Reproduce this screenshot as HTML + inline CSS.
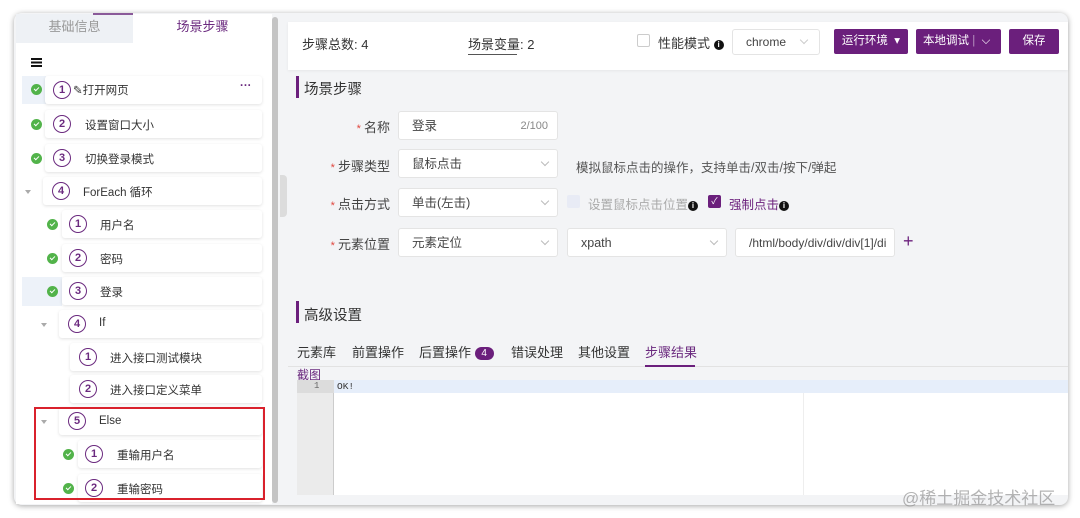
<!DOCTYPE html>
<html><head><meta charset="utf-8"><style>
*{box-sizing:border-box;margin:0;padding:0}
body{width:1080px;height:518px;background:#fff;position:relative;overflow:hidden;font-family:"Liberation Sans","Noto Sans CJK SC",sans-serif;font-size:12px;color:#333}
.a{position:absolute}
.frame{left:14px;top:13px;width:1054px;height:492px;border-radius:8px;box-shadow:0 1px 6px rgba(0,0,0,.35);background:#f3f4f6;overflow:hidden}
.card{position:absolute;background:#fff;border-radius:3px;box-shadow:0 1px 3px rgba(0,0,0,.12);height:28px}
.ck{position:absolute;width:11px;height:11px;border-radius:50%;background:#52b34a}
.ck:after{content:"";position:absolute;left:3px;top:2.5px;width:4px;height:2px;border-left:1.3px solid #fff;border-bottom:1.3px solid #fff;transform:rotate(-45deg)}
.cir{position:absolute;width:18px;height:18px;border-radius:50%;border:1.6px solid #6b2a7f;color:#6b2a7f;font-size:11px;font-weight:bold;display:flex;align-items:center;justify-content:center;line-height:1}
.t{position:absolute;font-size:11.5px;color:#333}
.car{position:absolute;width:0;height:0;border-left:3.5px solid transparent;border-right:3.5px solid transparent;border-top:4px solid #aaa}
.lab{position:absolute;font-size:13px;color:#444;text-align:right;width:80px}
.lab b{color:#e0463e;font-weight:normal;font-size:11px}
.inp{position:absolute;background:#fff;border:1px solid #e4e4e4;border-radius:3px;height:29px;font-size:12.5px;color:#444;padding-left:13px;line-height:29px}
.dd{position:absolute;right:9px;top:9px;width:6px;height:6px;border-right:1px solid #bbb;border-bottom:1px solid #bbb;transform:rotate(45deg)}
.btn{position:absolute;background:#6b1f7c;color:#fff;border-radius:2px;height:25px;line-height:25px;font-size:11.5px;text-align:center}
.info{display:inline-block;width:10px;height:10px;border-radius:50%;background:#111;color:#fff;font-size:8px;line-height:10px;text-align:center;font-weight:bold;vertical-align:middle}
</style></head><body>
<div class="a frame"></div>
<div class="a" style="left:16px;top:14px;width:256px;height:490px;background:#fff"></div>
<div class="a" style="left:16px;top:14px;width:117px;height:29px;background:#eef1f5;color:#999;font-size:13px;text-align:center;line-height:25px">基础信息</div>
<div class="a" style="left:133px;top:14px;width:139px;height:29px;color:#6b2a7f;font-size:13px;text-align:center;line-height:25px">场景步骤</div>
<div class="a" style="left:93px;top:13px;width:40px;height:2px;background:#8a5a99"></div>
<div class="a" style="left:272px;top:17px;width:6px;height:486px;background:#c4c4c4;border-radius:3px"></div>
<div class="a" style="left:31px;top:58px;width:11px;height:2px;background:#111;box-shadow:0 3.5px 0 #111,0 7px 0 #111"></div>
<div class="a" style="left:22px;top:76px;width:24px;height:28px;background:#edf2f9"></div>
<div class="a" style="left:22px;top:277px;width:40px;height:29px;background:#edf2f9"></div>

<div class="card" style="left:45px;top:76px;width:217px"></div>
<div class="ck" style="left:31px;top:84px"></div><div class="cir" style="left:53px;top:81px">1</div>
<div class="t" style="left:73px;top:82px">✎打开网页</div>
<div class="t" style="left:240px;top:80px;font-weight:bold;color:#6b2a7f">···</div>

<div class="card" style="left:45px;top:110px;width:217px"></div>
<div class="ck" style="left:31px;top:119px"></div><div class="cir" style="left:53px;top:115px">2</div><div class="t" style="left:85px;top:117px">设置窗口大小</div>

<div class="card" style="left:45px;top:144px;width:217px"></div>
<div class="ck" style="left:31px;top:153px"></div><div class="cir" style="left:53px;top:149px">3</div><div class="t" style="left:85px;top:151px">切换登录模式</div>

<div class="card" style="left:43px;top:177px;width:219px"></div>
<div class="car" style="left:25px;top:190px"></div><div class="cir" style="left:52px;top:182px">4</div><div class="t" style="left:83px;top:184px">ForEach 循环</div>

<div class="card" style="left:62px;top:210px;width:200px"></div>
<div class="ck" style="left:47px;top:219px"></div><div class="cir" style="left:69px;top:215px">1</div><div class="t" style="left:100px;top:217px">用户名</div>

<div class="card" style="left:62px;top:244px;width:200px"></div>
<div class="ck" style="left:47px;top:253px"></div><div class="cir" style="left:69px;top:249px">2</div><div class="t" style="left:100px;top:251px">密码</div>

<div class="card" style="left:62px;top:277px;width:200px"></div>
<div class="ck" style="left:47px;top:286px"></div><div class="cir" style="left:69px;top:282px">3</div><div class="t" style="left:100px;top:284px">登录</div>

<div class="card" style="left:59px;top:310px;width:203px"></div>
<div class="car" style="left:41px;top:323px"></div><div class="cir" style="left:68px;top:315px">4</div><div class="t" style="left:99px;top:317px">If</div>

<div class="card" style="left:70px;top:343px;width:192px"></div>
<div class="cir" style="left:79px;top:348px">1</div><div class="t" style="left:110px;top:350px">进入接口测试模块</div>

<div class="card" style="left:70px;top:375px;width:192px"></div>
<div class="cir" style="left:79px;top:380px">2</div><div class="t" style="left:110px;top:382px">进入接口定义菜单</div>

<div class="card" style="left:59px;top:407px;width:203px"></div>
<div class="car" style="left:41px;top:420px"></div><div class="cir" style="left:68px;top:412px">5</div><div class="t" style="left:99px;top:415px">Else</div>

<div class="card" style="left:78px;top:440px;width:184px"></div>
<div class="ck" style="left:63px;top:449px"></div><div class="cir" style="left:85px;top:445px">1</div><div class="t" style="left:117px;top:447px">重输用户名</div>

<div class="card" style="left:78px;top:474px;width:184px"></div>
<div class="ck" style="left:63px;top:483px"></div><div class="cir" style="left:85px;top:479px">2</div><div class="t" style="left:117px;top:481px">重输密码</div>

<div class="a" style="left:34px;top:407px;width:231px;height:93px;border:2px solid #d9212c"></div>

<div class="a" style="left:280px;top:175px;width:7px;height:42px;background:#dcdcdc;border-radius:0 4px 4px 0"></div>

<div class="a" style="left:288px;top:22px;width:780px;height:48px;background:#fff;box-shadow:0 1px 3px rgba(0,0,0,.06)"></div>
<div class="a" style="left:302px;top:34px;font-size:13px;color:#333">步骤总数: 4</div>
<div class="a" style="left:468px;top:34px;font-size:13px;color:#333">场景变量: 2</div>
<div class="a" style="left:468px;top:54px;width:49px;height:1px;background:#555"></div>
<div class="a" style="left:637px;top:34px;width:13px;height:13px;border:1px solid #ccc;border-radius:2px;background:#fff"></div>
<div class="a" style="left:658px;top:33px;font-size:13px;color:#333">性能模式 <span class="info">i</span></div>
<div class="inp" style="left:732px;top:29px;width:88px;height:26px;line-height:24px;font-size:12px;padding-left:13px">chrome<i class="dd" style="right:12px;top:7px;border-color:#ccc"></i></div>
<div class="btn" style="left:834px;top:29px;width:74px">运行环境 &nbsp;▾</div>
<div class="btn" style="left:916px;top:29px;width:85px;text-align:left;padding-left:7px">本地调试 <span style="opacity:.5">|</span>&nbsp; ⌵</div>
<div class="btn" style="left:1009px;top:29px;width:50px">保存</div>

<div class="a" style="left:296px;top:76px;width:3px;height:22px;background:#6b1f7c"></div>
<div class="a" style="left:304px;top:78px;font-size:14.5px;color:#333">场景步骤</div>

<div class="lab" style="left:310px;top:117px"><b>* </b>名称</div>
<div class="inp" style="left:398px;top:111px;width:160px">登录<span style="position:absolute;right:9px;font-size:11px;color:#888">2/100</span></div>

<div class="lab" style="left:310px;top:156px"><b>* </b>步骤类型</div>
<div class="inp" style="left:398px;top:149px;width:160px">鼠标点击<i class="dd"></i></div>
<div class="a" style="left:576px;top:157px;font-size:12.5px;color:#555">模拟鼠标点击的操作，支持单击/双击/按下/弹起</div>

<div class="lab" style="left:310px;top:194px"><b>* </b>点击方式</div>
<div class="inp" style="left:398px;top:188px;width:160px">单击(左击)<i class="dd"></i></div>
<div class="a" style="left:567px;top:195px;width:13px;height:13px;background:#e8ebf5;border-radius:2px"></div>
<div class="a" style="left:588px;top:194px;font-size:12.5px;color:#aaa">设置鼠标点击位置<span class="info">i</span></div>
<div class="a" style="left:708px;top:195px;width:13px;height:13px;background:#6b1f7c;border-radius:2px;color:#fff;font-size:9px;text-align:center;line-height:13px">✓</div>
<div class="a" style="left:729px;top:194px;font-size:12.5px;color:#6b1f7c">强制点击<span class="info">i</span></div>

<div class="lab" style="left:310px;top:234px"><b>* </b>元素位置</div>
<div class="inp" style="left:398px;top:228px;width:160px">元素定位<i class="dd"></i></div>
<div class="inp" style="left:567px;top:228px;width:160px">xpath<i class="dd"></i></div>
<div class="inp" style="left:735px;top:228px;width:160px;font-size:12px">/html/body/div/div/div[1]/di</div>
<div class="a" style="left:903px;top:231px;font-size:18px;color:#6b1f7c">+</div>

<div class="a" style="left:296px;top:301px;width:3px;height:22px;background:#6b1f7c"></div>
<div class="a" style="left:304px;top:304px;font-size:14.5px;color:#333">高级设置</div>
<div class="a" style="left:297px;top:342px;font-size:13px;color:#333">元素库</div>
<div class="a" style="left:352px;top:342px;font-size:13px;color:#333">前置操作</div>
<div class="a" style="left:419px;top:342px;font-size:13px;color:#333">后置操作 <span style="display:inline-block;width:19px;height:13px;border-radius:7px;background:#6b1f7c;color:#fff;font-size:10px;text-align:center;line-height:13px;vertical-align:1px">4</span></div>
<div class="a" style="left:511px;top:342px;font-size:13px;color:#333">错误处理</div>
<div class="a" style="left:578px;top:342px;font-size:13px;color:#333">其他设置</div>
<div class="a" style="left:645px;top:342px;font-size:13px;color:#6b2a7f">步骤结果</div>
<div class="a" style="left:288px;top:366px;width:780px;height:1px;background:#e2e2e2"></div>
<div class="a" style="left:645px;top:365px;width:50px;height:2px;background:#6b1f7c"></div>
<div class="a" style="left:297px;top:366px;font-size:12px;color:#6b2a7f">截图</div>

<div class="a" style="left:297px;top:380px;width:771px;height:115px;background:#fff"></div>
<div class="a" style="left:297px;top:380px;width:37px;height:115px;background:#ebebeb;border-right:1px solid #ccc"></div>
<div class="a" style="left:334px;top:380px;width:734px;height:13px;background:#e6eefa"></div>
<div class="a" style="left:297px;top:380px;width:37px;height:13px;background:#dcdcdc"></div>
<div class="a" style="left:314px;top:381px;font-size:9px;color:#666;font-family:'Liberation Mono',monospace">1</div>
<div class="a" style="left:337px;top:381px;font-size:9.5px;color:#333;font-family:'Liberation Mono',monospace">OK!</div>
<div class="a" style="left:803px;top:393px;width:1px;height:102px;background:#eee"></div>
<div class="a" style="left:902px;top:484px;font-size:17px;color:rgba(140,140,140,.65)">@稀土掘金技术社区</div>
</body></html>
